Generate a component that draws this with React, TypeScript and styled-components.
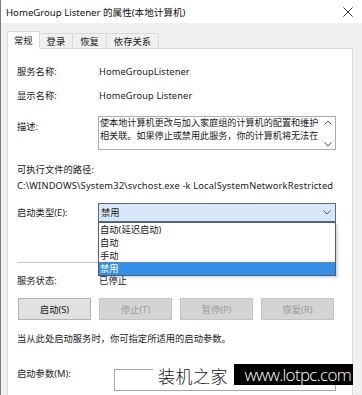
import React from 'react';
import styled, { createGlobalStyle } from 'styled-components';

const uiFont = `"Noto Sans", "Noto Sans CJK SC", sans-serif`;

const GlobalStyle = createGlobalStyle`
  html, body {
    margin: 0;
    padding: 0;
    background: #ffffff;
  }
  * {
    box-sizing: border-box;
  }
`;

// whole dialog window
const Window = styled.div`
  position: relative;
  width: 362px;
  height: 395px;
  overflow: hidden;
  background: #f0f0f0;
  border-left: 1px solid #7d7d7d;
  font-family: ${uiFont};
  font-size: 9.3px;
  color: #1a1a1a;
`;

const TitleBar = styled.div`
  height: 23px;
  background: #ffffff;
  display: flex;
  align-items: center;
  justify-content: space-between;
  padding: 0 9px 0 5px;
`;

const TitleText = styled.span`
  font-size: 9.6px;
  color: #111;
`;

const Body = styled.div`
  padding: 7px 9px 0 6px;
`;

const TabRow = styled.div`
  display: flex;
  align-items: flex-end;
  height: 18px;
  position: relative;
  z-index: 1;
`;

const Tab = styled.div<{ $active?: boolean }>`
  height: ${(p) => (p.$active ? '18px' : '15px')};
  padding: 0 ${(p) => (p.$active ? '6px' : '7px')};
  margin-left: ${(p) => (p.$active ? '0' : '-1px')};
  display: flex;
  align-items: center;
  background: ${(p) => (p.$active ? '#ffffff' : '#f0f0f0')};
  border: 1px solid #d9d9d9;
  border-bottom: ${(p) => (p.$active ? '1px solid #ffffff' : 'none')};
  margin-bottom: ${(p) => (p.$active ? '-1px' : '0')};
  z-index: ${(p) => (p.$active ? 2 : 1)};
  white-space: nowrap;
`;

const Panel = styled.div`
  background: #ffffff;
  border: 1px solid #d9d9d9;
  height: 360px;
  padding: 0 16px 0 9px;
  display: flex;
  flex-direction: column;
`;

const Field = styled.div<{ $top: number; $align?: string }>`
  display: flex;
  align-items: ${(p) => p.$align || 'center'};
  margin-top: ${(p) => p.$top}px;
  line-height: 16px;
  min-height: 16px;
`;

const Label = styled.div<{ $w?: number; $shift?: number }>`
  width: ${(p) => p.$w ?? 81}px;
  flex-shrink: 0;
  margin-top: ${(p) => p.$shift ?? 0}px;
  white-space: nowrap;
`;

const Value = styled.div`
  padding-left: 1px;
  white-space: nowrap;
  letter-spacing: 0.1px;
`;

const Line = styled.div<{ $top: number; $spread?: boolean }>`
  margin-top: ${(p) => p.$top}px;
  line-height: 16px;
  white-space: nowrap;
  letter-spacing: ${(p) => (p.$spread ? '0.16px' : '0')};
`;

const DescBox = styled.div`
  flex: 1;
  height: 34px;
  border: 1px solid #abadb3;
  display: flex;
  background: #fff;
`;

const DescText = styled.div`
  flex: 1;
  min-width: 0;
  padding: 0 0 0 1px;
  line-height: 12.5px;
  font-size: 9.1px;
  white-space: nowrap;
  overflow: hidden;
`;

const ScrollCol = styled.div`
  width: 14px;
  flex-shrink: 0;
  display: flex;
  flex-direction: column;
  justify-content: space-between;
  align-items: center;
  padding: 3px 0 2px;
`;

const SelectWrap = styled.div`
  position: relative;
  flex: 1;
`;

const SelectBox = styled.div`
  height: 19px;
  border: 1px solid #4f6d8c;
  background: #d6e8f7;
  display: flex;
  align-items: center;
  justify-content: space-between;
  padding: 0 4px 0 2px;
`;

const DropList = styled.div`
  position: absolute;
  left: 0;
  right: 0;
  top: 100%;
  background: #ffffff;
  border: 1px solid #5a5a5a;
  box-shadow: 2px 2px 2px rgba(0, 0, 0, 0.15);
  z-index: 5;
`;

const DropItem = styled.div<{ $hot?: boolean }>`
  height: 13px;
  line-height: 13px;
  padding-left: 1px;
  background: ${(p) => (p.$hot ? '#3390e6' : 'transparent')};
  color: ${(p) => (p.$hot ? '#ffffff' : '#1a1a1a')};
`;

const Separator = styled.div<{ $top: number }>`
  margin-top: ${(p) => p.$top}px;
  height: 1px;
  background: #c9c9c9;
`;

const ButtonRow = styled.div`
  display: flex;
  gap: 8px;
  margin-top: 9px;
  padding-left: 1px;
`;

const Button = styled.div<{ $disabled?: boolean }>`
  width: 73px;
  height: 22px;
  display: flex;
  align-items: center;
  justify-content: center;
  background: ${(p) => (p.$disabled ? '#d4d4d4' : '#e1e1e1')};
  border: 1px solid ${(p) => (p.$disabled ? '#c4c4c4' : '#b3b3b3')};
  color: ${(p) => (p.$disabled ? '#9a9a9a' : '#1a1a1a')};
`;

const ParamInput = styled.div`
  flex: 1;
  height: 22px;
  margin-top: 3px;
  border: 1px solid #a8a8a8;
  background: #fff;
`;

// watermark overlay at the bottom
const MarkLight = styled.div`
  position: absolute;
  left: 152px;
  top: 362px;
  width: 81px;
  height: 26px;
  background: #ffffff;
  display: flex;
  align-items: center;
  padding-left: 5px;
  font-family: "Noto Sans CJK SC", sans-serif;
  font-weight: 300;
  font-size: 17px;
  letter-spacing: 0.5px;
  color: #111;
  z-index: 6;
`;

const MarkDark = styled.div`
  position: absolute;
  left: 233px;
  top: 364px;
  width: 119px;
  height: 21px;
  background: #000000;
  color: #ffffff;
  display: flex;
  align-items: center;
  justify-content: flex-end;
  padding-right: 2px;
  font-family: "Open Sans", sans-serif;
  font-weight: 300;
  font-size: 17px;
  letter-spacing: -0.7px;
  z-index: 6;
`;

const Chevron = ({ up }: { up?: boolean }) => (
  <svg width="8" height="5" viewBox="0 0 8 5">
    <path
      d={up ? 'M0.5 4.5 L4 1 L7.5 4.5' : 'M0.5 0.5 L4 4 L7.5 0.5'}
      fill="none"
      stroke="#555"
      strokeWidth="1"
    />
  </svg>
);

const CloseIcon = () => (
  <svg width="10" height="10" viewBox="0 0 10 10">
    <path d="M0.5 0.5 L9.5 9.5 M9.5 0.5 L0.5 9.5" stroke="#333" strokeWidth="1" />
  </svg>
);

const App: React.FC = () => {
  return (
    <>
      <GlobalStyle />
      <Window>
        <TitleBar>
          <TitleText>HomeGroup Listener 的属性(本地计算机)</TitleText>
          <CloseIcon />
        </TitleBar>
        <Body>
          <TabRow>
            <Tab $active>常规</Tab>
            <Tab>登录</Tab>
            <Tab>恢复</Tab>
            <Tab>依存关系</Tab>
          </TabRow>
          <Panel>
            <Field $top={15}>
              <Label>服务名称:</Label>
              <Value>HomeGroupListener</Value>
            </Field>
            <Field $top={8}>
              <Label>显示名称:</Label>
              <Value>HomeGroup Listener</Value>
            </Field>
            <Field $top={12} $align="flex-start">
              <Label $shift={3}>描述:</Label>
              <DescBox>
                <DescText>
                  使本地计算机更改与加入家庭组的计算机的配置和维护
                  <br />
                  相关联。如果停止或禁用此服务，你的计算机将无法在
                </DescText>
                <ScrollCol>
                  <Chevron up />
                  <Chevron />
                </ScrollCol>
              </DescBox>
            </Field>
            <Line $top={12}>可执行文件的路径:</Line>
            <Line $top={0} $spread>
              C:\WINDOWS\System32\svchost.exe -k LocalSystemNetworkRestricted
            </Line>
            <Field $top={9}>
              <Label>启动类型(E):</Label>
              <SelectWrap>
                <SelectBox>
                  <span>禁用</span>
                  <Chevron />
                </SelectBox>
                <DropList>
                  <DropItem>自动(延迟启动)</DropItem>
                  <DropItem>自动</DropItem>
                  <DropItem>手动</DropItem>
                  <DropItem $hot>禁用</DropItem>
                </DropList>
              </SelectWrap>
            </Field>
            <Separator $top={40} />
            <Field $top={10}>
              <Label>服务状态:</Label>
              <Value>已停止</Value>
            </Field>
            <ButtonRow>
              <Button>启动(S)</Button>
              <Button $disabled>停止(T)</Button>
              <Button $disabled>暂停(P)</Button>
              <Button $disabled>恢复(R)</Button>
            </ButtonRow>
            <Line $top={11}>当从此处启动服务时，你可指定所适用的启动参数。</Line>
            <Field $top={19} $align="flex-start">
              <Label $w={97}>启动参数(M):</Label>
              <ParamInput />
            </Field>
          </Panel>
        </Body>
        <MarkLight>装机之家</MarkLight>
        <MarkDark>www.lotpc.com</MarkDark>
      </Window>
    </>
  );
};

export default App;
